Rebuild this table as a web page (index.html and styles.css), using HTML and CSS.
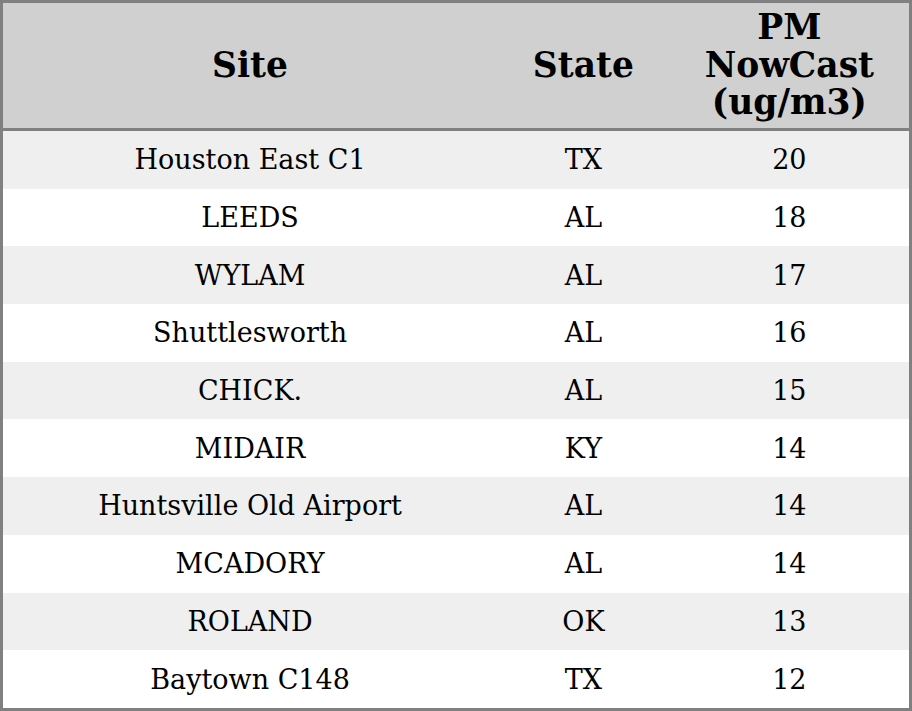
FILE: index.html
```html
<!DOCTYPE html>
<html>
<head>
<meta charset="utf-8">
<link rel="stylesheet" href="styles.css">
</head>
<body>
<table class="data">
  <colgroup>
    <col class="c-site"><col class="c-state"><col class="c-pm">
  </colgroup>
  <thead>
    <tr><th>Site</th><th>State</th><th>PM NowCast (ug/m3)</th></tr>
  </thead>
  <tbody>
    <tr><td>Houston East C1</td><td>TX</td><td>20</td></tr>
    <tr><td>LEEDS</td><td>AL</td><td>18</td></tr>
    <tr><td>WYLAM</td><td>AL</td><td>17</td></tr>
    <tr><td>Shuttlesworth</td><td>AL</td><td>16</td></tr>
    <tr><td>CHICK.</td><td>AL</td><td>15</td></tr>
    <tr><td>MIDAIR</td><td>KY</td><td>14</td></tr>
    <tr><td>Huntsville Old Airport</td><td>AL</td><td>14</td></tr>
    <tr><td>MCADORY</td><td>AL</td><td>14</td></tr>
    <tr><td>ROLAND</td><td>OK</td><td>13</td></tr>
    <tr><td>Baytown C148</td><td>TX</td><td>12</td></tr>
  </tbody>
</table>
</body>
</html>
```
FILE: styles.css
```css
html, body {
  margin: 0;
  padding: 0;
  background: #ffffff;
}
.data {
  width: 912px;
  height: 711px;
  border-collapse: collapse;
  border: 3px solid #808080;
  font-family: "DejaVu Serif", serif;
  color: #000;
  table-layout: fixed;
}
.c-site { width: 494px; }
.c-state { width: 172px; }
.c-pm { width: 240px; }
.data th {
  background: #d0d0d0;
  font-size: 34.5px;
  font-weight: bold;
  line-height: 37.5px;
  height: 125px;
  padding: 0 16px;
  text-align: center;
  border-bottom: 3px solid #808080;
}
.data td {
  font-size: 27px;
  text-align: center;
  padding: 0;
  height: 57.7px;
}
.data tbody tr:nth-child(odd) td {
  background: #efefef;
}
```
